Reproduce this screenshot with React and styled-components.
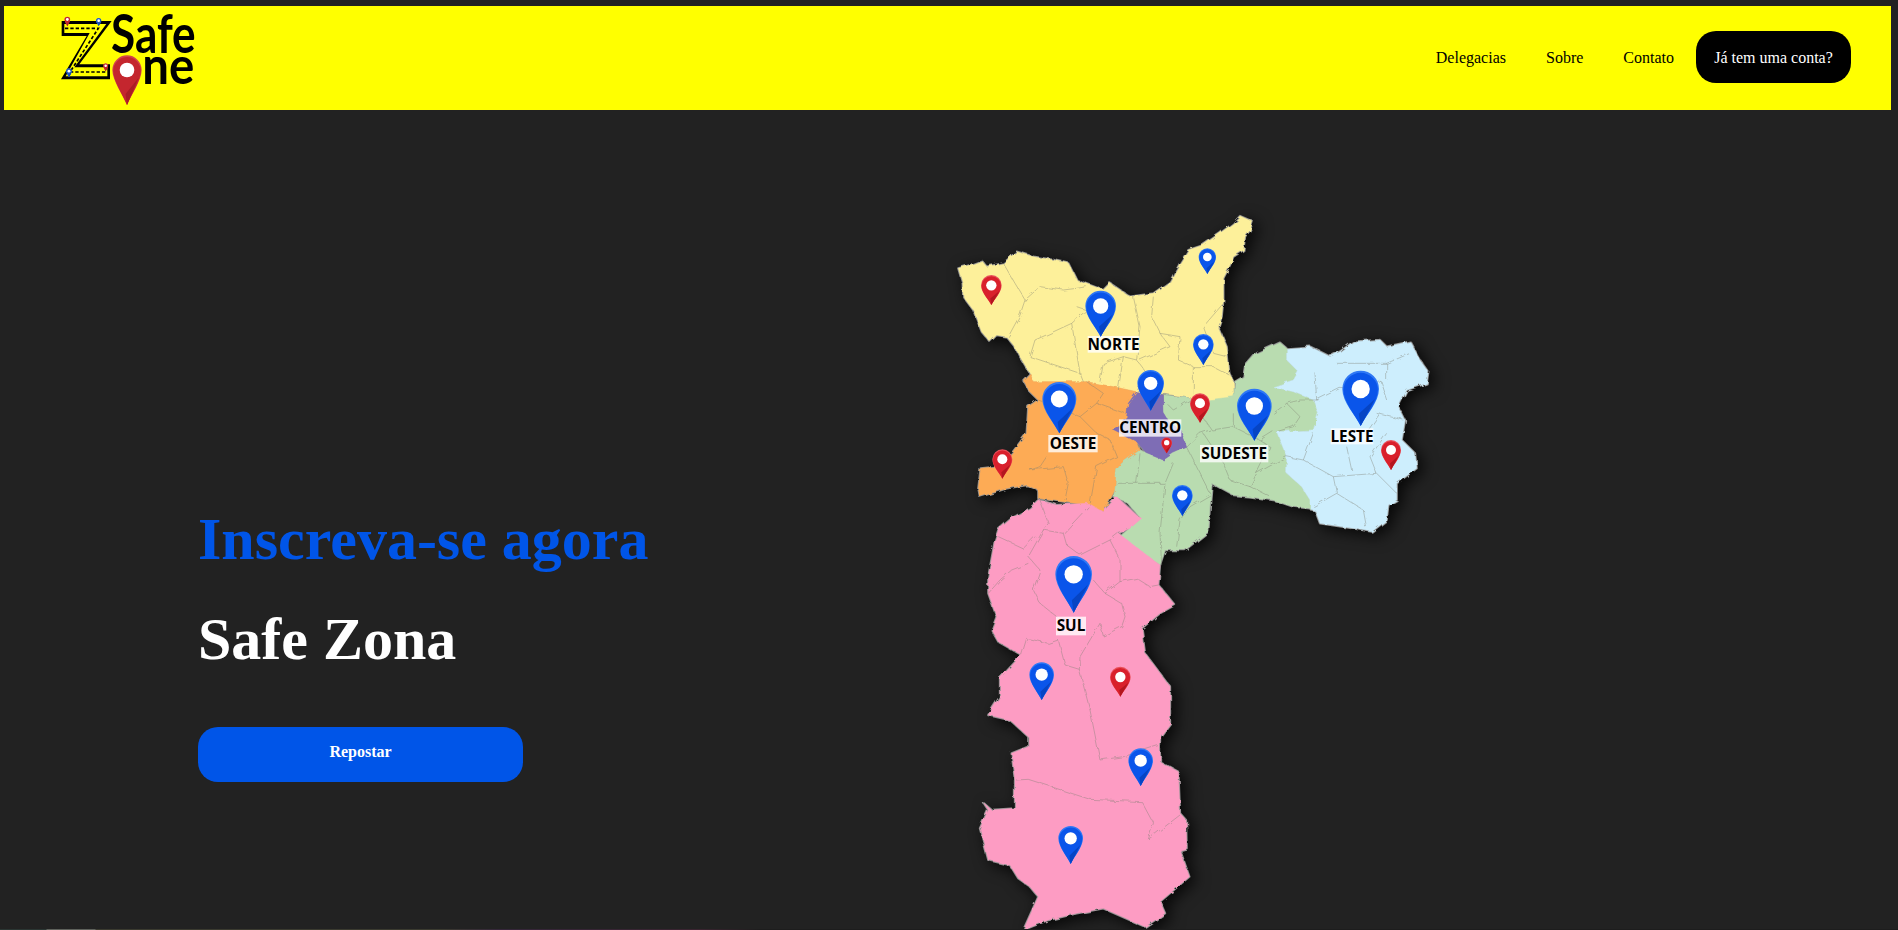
import React from "react";
import styled, { createGlobalStyle } from "styled-components";

const GlobalStyle = createGlobalStyle`
  html, body {
    margin: 0;
    padding: 0;
    background-color: #222222;
    font-family: "Liberation Serif", "Times New Roman", serif;
  }
`;

const Page = styled.div`
  height: 930px;
  overflow: hidden;
  display: flex;
  flex-direction: column;
`;
const Navbar = styled.header`
  flex: none;
  height: 104px;
  margin: 6px 7px 0 4px;
  padding: 0 40px 0 51px;
  background-color: #ffff00;
  display: flex;
  align-items: center;
  justify-content: space-between;
`;
const LogoSvg = styled.svg`
  display: block;
  width: 150px;
  height: 95px;
  overflow: visible;
`;
const LogoText = styled.text`
  font-family: "Lato", "Liberation Sans", sans-serif;
  font-weight: 700;
  font-size: ${(p) => p.$size}px;
  fill: #000;
`;
const NavLinks = styled.nav`
  display: flex;
  align-items: center;
  gap: 40px;
`;
const NavLink = styled.a`
  color: #000;
  font-size: 16px;
`;
const AccountBtn = styled.button`
  margin: 0 0 2px -18px;
  padding: 2px 0 0;
  width: 155px;
  height: 52px;
  background-color: #000;
  color: #fff;
  border: none;
  border-radius: 20px;
  font-family: inherit;
  font-size: 16px;
`;
const Hero = styled.main`
  flex: 1;
  min-height: 0;
  padding-left: 198px;
  display: flex;
  align-items: flex-start;
`;
const TextColumn = styled.section`
  flex: 0 0 742px;
  padding-top: 395px;
`;
const Title = styled.h1`
  margin: 0 0 31px;
  color: ${(p) => p.$color};
  font-size: 60px;
  font-weight: 700;
  line-height: 69px;
`;
const ReportBtn = styled.button`
  display: block;
  width: 325px;
  height: 55px;
  margin-top: 53px;
  padding-bottom: 7px;
  background-color: #0055e8;
  color: #fff;
  border: none;
  border-radius: 20px;
  font-family: inherit;
  font-size: 16px;
  font-weight: 700;
`;
const MapSvg = styled.svg`
  flex: none;
  display: block;
  width: 520px;
  height: 730px;
  margin-top: 90px;
  overflow: visible;
`;
const MapBody = styled.g`
  filter: drop-shadow(14px 12px 22px rgba(0, 0, 0, 0.8));
`;
const Region = styled.polygon`
  fill: ${(p) => p.$fill};
  stroke: ${(p) => p.$stroke || p.$fill};
  stroke-width: ${(p) => (p.$stroke ? 7 : 1.5)};
  stroke-linejoin: round;
`;
const Districts = styled.path`
  fill: none;
  stroke: #7f7f72;
  stroke-opacity: 0.6;
  stroke-width: 2;
  stroke-linejoin: round;
`;
const LabelBox = styled.rect`
  fill: #fff;
  fill-opacity: 0.78;
`;
const LabelText = styled.text`
  font-family: "Open Sans", "Liberation Sans", sans-serif;
  font-weight: 700;
  font-size: 46px;
  text-anchor: middle;
  fill: #000;
`;
const BottomStrip = styled.div`
  flex: none;
  height: 1px;
  background: linear-gradient(
    90deg,
    #2b3633 0,
    #2b3633 46px,
    #5f625c 47px,
    #5f625c 95px,
    #3b3b30 96px,
    #3b3b30 440px,
    #35263a 500px,
    #3a2430 700px,
    #1d1d1d 760px
  );
`;

const regions = [
  {
    name: "norte",
    fill: "#fdf09a",
    points:
      "900,48 938,65 930,90 915,110 910,150 880,170 870,195 850,235 850,300 845,350 835,380 860,440 868,520 880,545 882,590 840,600 800,600 680,582 590,575 520,560 440,545 340,545 280,545 270,520 240,470 225,440 200,410 170,405 150,425 125,395 100,330 70,290 68,250 55,205 90,195 125,182 140,200 190,190 230,155 280,170 340,180 385,190 410,240 450,255 490,270 510,250 570,290 640,280 690,245 720,190 745,150 790,135 840,100 880,70",
  },
  {
    name: "oeste",
    fill: "#fdab55",
    points:
      "270,520 280,545 340,545 440,545 520,560 590,575 565,610 560,650 520,690 590,725 600,750 545,790 530,810 525,870 490,935 445,915 370,905 295,895 295,870 260,855 200,865 120,890 115,865 122,805 170,800 215,760 260,700 265,620 295,600 270,575 250,540",
  },
  {
    name: "sudeste",
    fill: "#b9dcb0",
    points:
      "672,585 800,600 882,590 885,545 910,530 915,500 950,460 1020,428 1040,445 1040,480 1075,515 1060,540 1000,560 1060,575 1120,600 1135,640 1120,690 1010,695 1040,770 1040,820 1085,860 1110,900 1110,925 1060,920 1000,900 930,890 880,885 815,850 810,910 805,995 735,1050 675,1050 660,1095 540,1010 603,955 560,905 520,890 525,870 530,810 545,790 600,750 620,760 670,780 700,760 740,742 722,690 690,670 672,640",
  },
  {
    name: "leste",
    fill: "#cdeefd",
    points:
      "1040,445 1110,440 1170,470 1200,455 1240,425 1320,420 1340,440 1410,425 1440,480 1465,515 1460,550 1400,570 1375,620 1395,660 1385,720 1425,760 1430,805 1370,850 1370,900 1345,915 1340,960 1295,995 1240,985 1140,970 1125,930 1110,925 1110,900 1085,860 1040,820 1040,770 1010,695 1120,690 1135,640 1120,600 1060,575 1000,560 1060,540 1075,515 1040,480",
  },
  {
    name: "sul",
    fill: "#fd9cc3",
    points:
      "295,900 350,915 445,910 490,935 530,890 595,950 605,955 570,985 535,1000 660,1095 655,1155 705,1215 660,1240 605,1285 615,1360 690,1460 690,1570 660,1610 660,1685 715,1715 720,1840 738,1860 740,1945 720,1950 748,2030 660,2105 675,2140 615,2180 490,2125 410,2140 325,2160 250,2190 295,2090 270,2060 235,2035 210,1995 145,1980 120,1885 145,1830 132,1810 155,1830 225,1825 225,1740 215,1660 265,1640 265,1610 210,1560 145,1545 180,1490 180,1435 245,1365 175,1325 155,1290 170,1250 145,1180 145,1130 165,1020 175,990 215,955 270,925",
  },
  {
    name: "centro",
    fill: "#7e6db5",
    points:
      "590,575 670,585 672,640 690,670 722,690 740,742 700,760 670,780 620,760 590,725 520,690 560,650 565,610",
  },
];

const districtLines = [
  "M190 190 L225 250 L255 300 L300 260 L370 270 L410 265 L440 260",
  "M255 300 L240 345 L205 410",
  "M410 320 L440 330 L395 370 L420 520 L430 545",
  "M395 370 L330 400 L285 420 L270 470 L330 490 L420 520",
  "M580 290 L600 380 L590 480 L620 520 L590 575",
  "M640 290 L635 350 L660 400 L720 410 L715 480 L760 500 L760 580",
  "M590 480 L550 470 L490 490 L480 545",
  "M550 470 L535 570",
  "M850 310 L790 380 L820 460 L860 470",
  "M760 500 L820 500 L868 525",
  "M660 400 L690 440 L600 480",
  "M295 600 L420 650 L470 610 L490 580 L440 545",
  "M470 610 L555 640",
  "M420 650 L470 700 L510 720 L530 770 L470 800 L450 915",
  "M320 770 L300 800 L270 810 L370 800 L385 850 L375 900",
  "M810 690 L780 700 L740 742 L810 880",
  "M680 610 L700 630 L750 600",
  "M760 610 L815 690 L880 680 L880 640",
  "M880 680 L960 720 L1000 695",
  "M1000 640 L1040 610 L1080 650 L1060 680 L1010 695",
  "M1040 610 L1080 600 L1135 600",
  "M790 700 L850 790 L870 840 L930 860 L950 820 L1040 770",
  "M960 720 L990 740 L950 820",
  "M930 860 L990 890",
  "M600 760 L590 850 L530 850",
  "M590 850 L675 850 L700 790",
  "M675 850 L660 1000 L665 1095",
  "M710 1040 L720 960 L750 920 L810 885",
  "M1125 520 L1130 600 L1200 565 L1280 570 L1320 540 L1340 600",
  "M1340 490 L1340 540",
  "M1190 490 L1340 490 L1410 460",
  "M1310 640 L1390 660",
  "M1320 640 L1285 690",
  "M1120 700 L1090 780 L1040 770",
  "M1090 780 L1180 830 L1310 820 L1290 770 L1340 700",
  "M1220 740 L1235 810",
  "M1180 830 L1190 880 L1120 920",
  "M1190 880 L1270 930 L1280 985",
  "M1310 820 L1370 880",
  "M300 900 L325 970 L310 990 L370 1000 L445 920",
  "M370 1000 L380 1035 L420 1065 L510 1020 L535 1000",
  "M310 990 L265 1070 L300 1110 L280 1170 L300 1210 L350 1250",
  "M175 1010 L250 1045 L285 1010",
  "M145 1180 L180 1140 L215 1110 L265 1090",
  "M510 1020 L540 1080 L540 1145 L590 1135 L630 1160 L655 1155",
  "M540 1145 L495 1180 L545 1210 L555 1250 L545 1280 L490 1308 L480 1270 L420 1370 L418 1410 L450 1530 L480 1680 L550 1670 L660 1635",
  "M460 1140 L495 1180",
  "M355 1320 L325 1330 L260 1315 L245 1365",
  "M355 1320 L375 1395 L418 1408",
  "M228 1740 L265 1738 L450 1798 L605 1805 L640 1870 L625 1918 L720 1845",
];

const pins = [
  { x: 154, top: 225, tip: 315, w: 62, kind: "red" },
  { x: 482, top: 272, tip: 410, w: 92, kind: "blue" },
  { x: 802, top: 145, tip: 222, w: 52, kind: "blue" },
  { x: 790, top: 402, tip: 495, w: 62, kind: "blue" },
  { x: 632, top: 510, tip: 632, w: 80, kind: "blue" },
  { x: 358, top: 546, tip: 700, w: 102, kind: "blue" },
  { x: 780, top: 580, tip: 668, w: 60, kind: "red" },
  { x: 943, top: 566, tip: 722, w: 104, kind: "blue" },
  { x: 1262, top: 512, tip: 678, w: 110, kind: "blue" },
  { x: 1353, top: 720, tip: 810, w: 60, kind: "red" },
  { x: 187, top: 748, tip: 836, w: 60, kind: "red" },
  { x: 680, top: 712, tip: 760, w: 32, kind: "red" },
  { x: 727, top: 855, tip: 948, w: 62, kind: "blue" },
  { x: 401, top: 1068, tip: 1238, w: 110, kind: "blue" },
  { x: 305, top: 1387, tip: 1500, w: 74, kind: "blue" },
  { x: 541, top: 1400, tip: 1490, w: 62, kind: "red" },
  { x: 602, top: 1645, tip: 1758, w: 74, kind: "blue" },
  { x: 392, top: 1878, tip: 1992, w: 74, kind: "blue" },
];

const labels = [
  { text: "NORTE", x: 443, y: 408, w: 155, h: 50 },
  { text: "OESTE", x: 325, y: 705, w: 148, h: 52 },
  { text: "CENTRO", x: 537, y: 658, w: 187, h: 52 },
  { text: "SUDESTE", x: 780, y: 735, w: 205, h: 52 },
  { text: "LESTE", x: 1172, y: 685, w: 128, h: 48 },
  { text: "SUL", x: 348, y: 1250, w: 90, h: 56 },
];

const pinColors = {
  blue: { main: "#0a55ea", dark: "#0644c4", rim: "#2f78f5" },
  red: { main: "#d9202c", dark: "#b3161f", rim: "#e8505a" },
  logo: { main: "#c4262e", dark: "#a81d25", rim: "#d2454c" },
  logoBlue: { main: "#1a56c0", dark: "#134298", rim: "#3a74d8" },
};

function pinPath(x, top, tip, r) {
  const cy = top + r;
  const h = tip - cy;
  return `M${x} ${tip} C${x - r * 0.3} ${tip - h * 0.3} ${x - r} ${cy + r * 0.7} ${x - r} ${cy} A${r} ${r} 0 1 1 ${x + r} ${cy} C${x + r} ${cy + r * 0.7} ${x + r * 0.3} ${tip - h * 0.3} ${x} ${tip}Z`;
}

function Pin({ x, top, tip, w, kind }) {
  const r = w / 2;
  const c = pinColors[kind];
  return (
    <g>
      <path d={pinPath(x, top, tip, r)} fill={c.rim} />
      <path d={pinPath(x, top + r * 0.12, tip, r * 0.94)} fill={c.main} />
      <path
        d={`M${x} ${tip} L${x + r * 0.78} ${top + r * 1.55} L${x - r * 0.1} ${tip - (tip - top) * 0.22}Z`}
        fill={c.dark}
      />
      <circle cx={x} cy={top + r} r={r * 0.5} fill="#fff" />
    </g>
  );
}

function Logo() {
  return (
    <LogoSvg viewBox="0 0 450 285" aria-label="Safe Zone">
      <polygon points="20,30 170,30 73,160 165,160 165,205 18,205 95,75 20,75" fill="#000" />
      <polygon points="28,39 154,39 58,169 157,169 157,196 32,196 104,66 28,66" fill="#ffff00" />
      <polyline points="30,52 130,52 45,183 155,183" fill="none" stroke="#000" strokeWidth="5" strokeDasharray="10 6" />
      <Pin x={37} top={17} tip={46} w={17} kind="logo" />
      <Pin x={131} top={21} tip={45} w={16} kind="logoBlue" />
      <Pin x={152} top={157} tip={181} w={15} kind="logo" />
      <Pin x={42} top={172} tip={199} w={17} kind="logoBlue" />
      <LogoText $size={160} x="168" y="125" textLength="254" lengthAdjust="spacingAndGlyphs">Safe</LogoText>
      <LogoText $size={155} x="262" y="219" textLength="156" lengthAdjust="spacingAndGlyphs">ne</LogoText>
      <Pin x={216} top={133} tip={282} w={88} kind="logo" />
    </LogoSvg>
  );
}

function SaoPauloMap() {
  return (
    <MapSvg viewBox="0 0 1560 2190">
      <defs>
        {/* the outline of the map is jagged, not straight between the points */}
        <filter id="roughEdge" filterUnits="userSpaceOnUse" x="0" y="0" width="1560" height="2220">
          <feTurbulence type="fractalNoise" baseFrequency="0.035" numOctaves="3" seed="4" />
          <feDisplacementMap in="SourceGraphic" scale="14" />
        </filter>
      </defs>
      <MapBody>
        <g filter="url(#roughEdge)">
          {regions.map((r) => (
            <Region key={r.name} points={r.points} $fill={r.fill} $stroke="#8f8f8f" />
          ))}
          {regions.map((r) => (
            <Region key={r.name} points={r.points} $fill={r.fill} />
          ))}
          <Districts d={districtLines.join(" ")} />
        </g>
      </MapBody>
      {labels.map((l) => (
        <g key={l.text}>
          <LabelBox x={l.x} y={l.y} width={l.w} height={l.h} />
          <LabelText x={l.x + l.w / 2} y={l.y + l.h / 2 + 16}>
            {l.text}
          </LabelText>
        </g>
      ))}
      {pins.map((p) => (
        <Pin key={`${p.x}-${p.top}`} {...p} />
      ))}
    </MapSvg>
  );
}

export default function App() {
  return (
    <Page>
      <GlobalStyle />
      <Navbar>
        <Logo />
        <NavLinks>
          <NavLink>Delegacias</NavLink>
          <NavLink>Sobre</NavLink>
          <NavLink>Contato</NavLink>
          <AccountBtn>Já tem uma conta?</AccountBtn>
        </NavLinks>
      </Navbar>
      <Hero>
        <TextColumn>
          <Title $color="#0055e8">Inscreva-se agora</Title>
          <Title $color="#ffffff">Safe Zona</Title>
          <ReportBtn>Repostar</ReportBtn>
        </TextColumn>
        <SaoPauloMap />
      </Hero>
      <BottomStrip />
    </Page>
  );
}
